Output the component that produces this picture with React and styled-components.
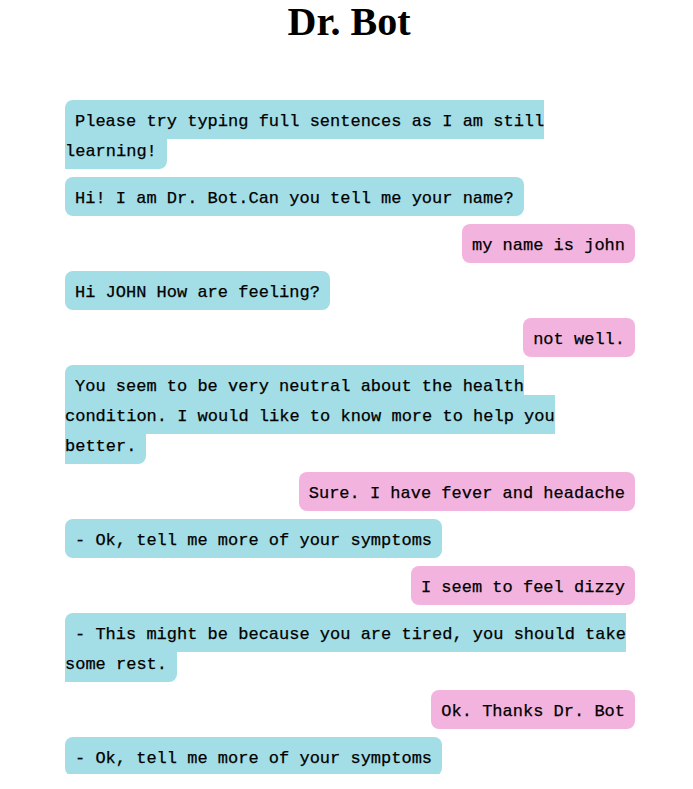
import React from "react";
import styled, { createGlobalStyle } from "styled-components";

const GlobalStyle = createGlobalStyle`
  html, body {
    margin: 0;
    padding: 0;
    background: #ffffff;
  }
  body {
    font-family: "Liberation Serif", "Times New Roman", serif;
    color: #000000;
  }
`;

const Page = styled.div`
  display: flex;
  flex-direction: column;
`;

const Title = styled.h1`
  margin: 0 0 63px;
  padding-left: 5px;
  font-family: "Liberation Serif", "Times New Roman", serif;
  font-size: 40px;
  font-weight: 700;
  line-height: 44px;
  text-align: center;
`;

const Conversation = styled.div`
  width: 570px;
  margin-left: 65px;
  display: flex;
  flex-direction: column;
  gap: 17px;
`;

const Row = styled.div`
  text-align: ${(p) => (p.$from === "user" ? "right" : "left")};
  font-family: "Liberation Mono", "Courier New", monospace;
  font-size: 17px;
  line-height: 30px;
`;

const Bubble = styled.span`
  display: inline;
  padding: 12px 10px 8px;
  border-radius: 8px;
  background: ${(p) => (p.$from === "user" ? "#f2b4df" : "#a3dde6")};
  color: #000000;
  -webkit-text-stroke: 0.25px #000000;
`;

const messages = [
  { from: "bot", text: "Please try typing full sentences as I am still learning!" },
  { from: "bot", text: "Hi! I am Dr. Bot.Can you tell me your name?" },
  { from: "user", text: "my name is john" },
  { from: "bot", text: "Hi JOHN How are feeling?" },
  { from: "user", text: "not well." },
  {
    from: "bot",
    text: "You seem to be very neutral about the health condition. I would like to know more to help you better.",
  },
  { from: "user", text: "Sure. I have fever and headache" },
  { from: "bot", text: "- Ok, tell me more of your symptoms" },
  { from: "user", text: "I seem to feel dizzy" },
  {
    from: "bot",
    text: "- This might be because you are tired, you should take some rest.",
  },
  { from: "user", text: "Ok. Thanks Dr. Bot" },
  { from: "bot", text: "- Ok, tell me more of your symptoms" },
];

export default function App() {
  return (
    <>
      <GlobalStyle />
      <Page>
        <Title>Dr. Bot</Title>
        <Conversation>
          {messages.map((m, i) => (
            <Row key={i} $from={m.from}>
              <Bubble $from={m.from}>{m.text}</Bubble>
            </Row>
          ))}
        </Conversation>
      </Page>
    </>
  );
}
